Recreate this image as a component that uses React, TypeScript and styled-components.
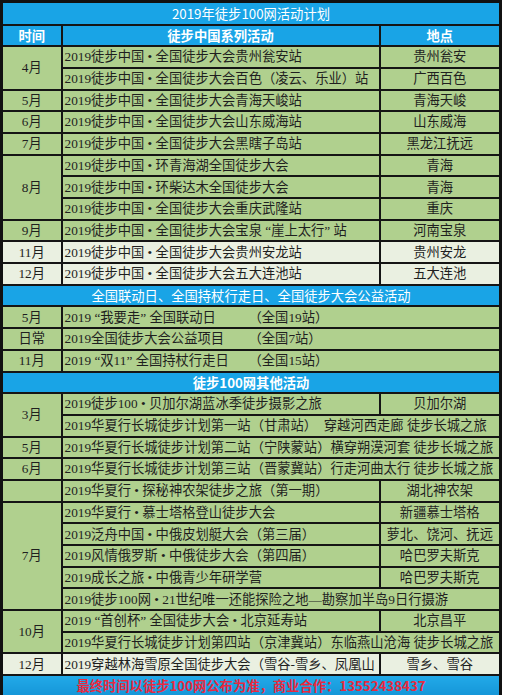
import React from 'react';
import styled, { createGlobalStyle } from 'styled-components';

type Tone = 'green' | 'light';

interface Item {
  activity: string;
  location?: string;
  note?: string;
}

interface Group {
  month: string;
  tone?: Tone;
  items: Item[];
}

const seriesOne: Group[] = [
  {
    month: '4月',
    items: [
      { activity: '2019徒步中国 • 全国徒步大会贵州瓮安站', location: '贵州瓮安' },
      { activity: '2019徒步中国 • 全国徒步大会百色（凌云、乐业）站', location: '广西百色' },
    ],
  },
  { month: '5月', items: [{ activity: '2019徒步中国 • 全国徒步大会青海天峻站', location: '青海天峻' }] },
  { month: '6月', items: [{ activity: '2019徒步中国 • 全国徒步大会山东威海站', location: '山东威海' }] },
  { month: '7月', items: [{ activity: '2019徒步中国 • 全国徒步大会黑瞎子岛站', location: '黑龙江抚远' }] },
  {
    month: '8月',
    items: [
      { activity: '2019徒步中国 • 环青海湖全国徒步大会', location: '青海' },
      { activity: '2019徒步中国 • 环柴达木全国徒步大会', location: '青海' },
      { activity: '2019徒步中国 • 全国徒步大会重庆武隆站', location: '重庆' },
    ],
  },
  { month: '9月', items: [{ activity: '2019徒步中国 • 全国徒步大会宝泉 “崖上太行” 站', location: '河南宝泉' }] },
  { month: '11月', tone: 'light', items: [{ activity: '2019徒步中国 • 全国徒步大会贵州安龙站', location: '贵州安龙' }] },
  { month: '12月', tone: 'light', items: [{ activity: '2019徒步中国 • 全国徒步大会五大连池站', location: '五大连池' }] },
];

const seriesTwo: Group[] = [
  { month: '5月', items: [{ activity: '2019 “我要走” 全国联动日', note: '（全国19站）' }] },
  { month: '日常', items: [{ activity: '2019全国徒步大会公益项目', note: '（全国7站）' }] },
  { month: '11月', items: [{ activity: '2019 “双11” 全国持杖行走日', note: '（全国15站）' }] },
];

const seriesThree: Group[] = [
  {
    month: '3月',
    items: [
      { activity: '2019徒步100 • 贝加尔湖蓝冰季徒步摄影之旅', location: '贝加尔湖' },
      { activity: '2019华夏行长城徒步计划第一站（甘肃站）　穿越河西走廊 徒步长城之旅' },
    ],
  },
  { month: '5月', items: [{ activity: '2019华夏行长城徒步计划第二站（宁陕蒙站）横穿朔漠河套 徒步长城之旅' }] },
  { month: '6月', items: [{ activity: '2019华夏行长城徒步计划第三站（晋蒙冀站）行走河曲太行 徒步长城之旅' }] },
  { month: '', items: [{ activity: '2019华夏行 • 探秘神农架徒步之旅（第一期）', location: '湖北神农架' }] },
  {
    month: '7月',
    items: [
      { activity: '2019华夏行 • 慕士塔格登山徒步大会', location: '新疆慕士塔格' },
      { activity: '2019泛舟中国 • 中俄皮划艇大会（第三届）', location: '萝北、饶河、抚远' },
      { activity: '2019风情俄罗斯 • 中俄徒步大会（第四届）', location: '哈巴罗夫斯克' },
      { activity: '2019成长之旅 • 中俄青少年研学营', location: '哈巴罗夫斯克' },
      { activity: '2019徒步100网 • 21世纪唯一还能探险之地—勘察加半岛9日行摄游' },
    ],
  },
  {
    month: '10月',
    items: [
      { activity: '2019 “首创杯” 全国徒步大会 • 北京延寿站', location: '北京昌平' },
      { activity: '2019华夏行长城徒步计划第四站（京津冀站）东临燕山沧海 徒步长城之旅' },
    ],
  },
  {
    month: '12月',
    tone: 'light',
    items: [{ activity: '2019穿越林海雪原全国徒步大会（雪谷-雪乡、凤凰山', location: '雪乡、雪谷' }],
  },
];

const GlobalStyle = createGlobalStyle`
  html, body {
    margin: 0;
    padding: 0;
    background: #ffffff;
  }
  body {
    font-family: "Liberation Serif", "Noto Sans CJK SC", serif;
  }
`;

const Sheet = styled.table`
  width: 502px;
  border-collapse: collapse;
  table-layout: fixed;
  border: 3px solid #111;
  font-size: 13.3px;
  color: #1f1f1f;
`;

const Row = styled.tr<{ $h?: number }>`
  height: ${(p) => p.$h ?? 21.7}px;
`;

const Cell = styled.td<{ $tone?: Tone; $center?: boolean }>`
  padding: 0 2px;
  border: 2px solid #151515;
  background: ${(p) => (p.$tone === 'light' ? '#eaf0e1' : '#b0d08e')};
  text-align: ${(p) => (p.$center ? 'center' : 'left')};
  white-space: nowrap;
  overflow: hidden;
  line-height: 1;
`;

const BlueCell = styled.td<{ $bold?: boolean }>`
  padding: 0;
  border: 2px solid #151515;
  background: #19a4e6;
  color: #ffffff;
  text-align: center;
  white-space: nowrap;
  font-family: "Noto Sans CJK SC", sans-serif;
  font-weight: ${(p) => (p.$bold ? 700 : 400)};
  line-height: 1;
`;

const FooterCell = styled(BlueCell)`
  background: linear-gradient(#22a9e8, #1596d8);
  color: #e8293f;
  font-weight: 700;
`;

const Note = styled.span`
  display: inline-block;
  width: 184px;
`;

const GroupRows: React.FC<{ group: Group }> = ({ group }) => (
  <>
    {group.items.map((item, i) => (
      <Row key={i}>
        {i === 0 && (
          <Cell rowSpan={group.items.length} $tone={group.tone} $center>
            {group.month}
          </Cell>
        )}
        {item.note ? (
          <Cell colSpan={2} $tone={group.tone}>
            <Note>{item.activity}</Note>
            {item.note}
          </Cell>
        ) : item.location ? (
          <>
            <Cell $tone={group.tone}>{item.activity}</Cell>
            <Cell $tone={group.tone} $center>
              {item.location}
            </Cell>
          </>
        ) : (
          <Cell colSpan={2} $tone={group.tone}>
            {item.activity}
          </Cell>
        )}
      </Row>
    ))}
  </>
);

export default function App() {
  return (
    <>
      <GlobalStyle />
      <Sheet>
        <colgroup>
          <col style={{ width: 60 }} />
          <col style={{ width: 318 }} />
          <col />
        </colgroup>
        <tbody>
          <Row $h={23}>
            <BlueCell colSpan={3}>2019年徒步100网活动计划</BlueCell>
          </Row>
          <Row>
            <BlueCell $bold>时间</BlueCell>
            <BlueCell $bold>徒步中国系列活动</BlueCell>
            <BlueCell $bold>地点</BlueCell>
          </Row>
          {seriesOne.map((g, i) => (
            <GroupRows key={`a${i}`} group={g} />
          ))}
          <Row>
            <BlueCell colSpan={3}>全国联动日、全国持杖行走日、全国徒步大会公益活动</BlueCell>
          </Row>
          {seriesTwo.map((g, i) => (
            <GroupRows key={`b${i}`} group={g} />
          ))}
          <Row>
            <BlueCell colSpan={3} $bold>
              徒步100网其他活动
            </BlueCell>
          </Row>
          {seriesThree.map((g, i) => (
            <GroupRows key={`c${i}`} group={g} />
          ))}
          <Row>
            <FooterCell colSpan={3}>最终时间以徒步100网公布为准，商业合作：13552438437</FooterCell>
          </Row>
        </tbody>
      </Sheet>
    </>
  );
}
